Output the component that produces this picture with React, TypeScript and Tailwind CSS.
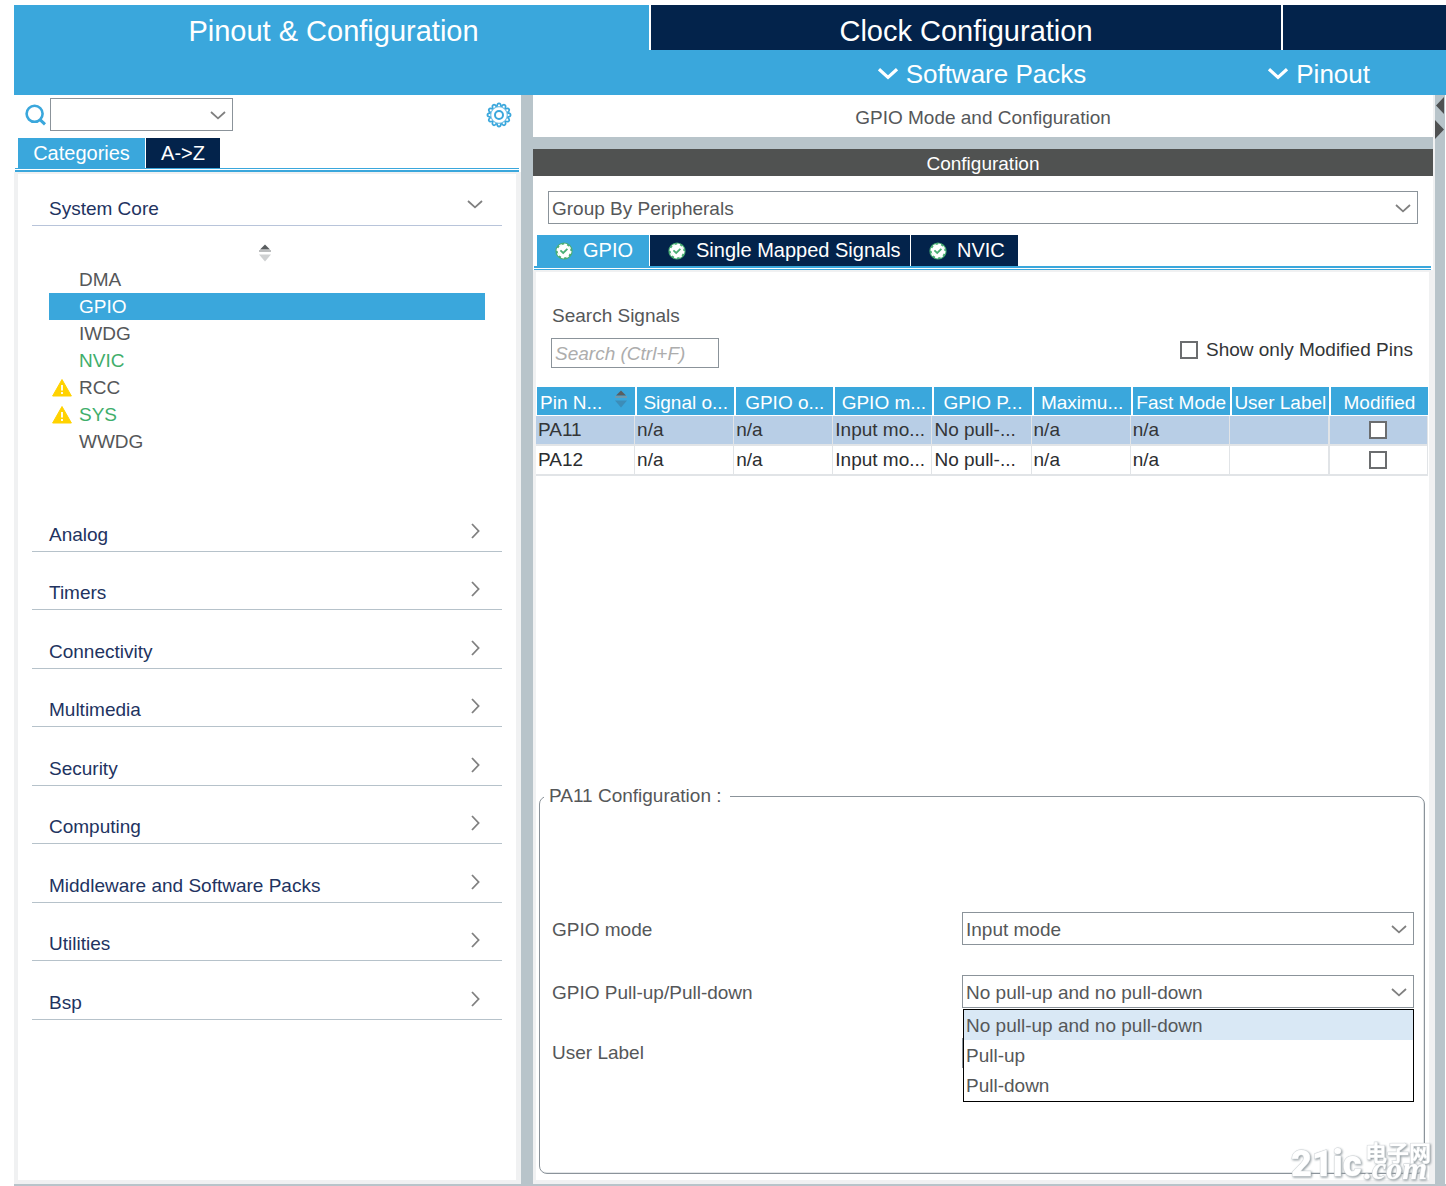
import React, { useState } from "react";

type IconProps = { className?: string };

function Chevron({ className = "" }: IconProps) {
  return (
    <svg viewBox="0 0 16 9" className={`h-[9px] w-4 ${className}`} fill="none" stroke="currentColor" strokeWidth="1.8" aria-hidden="true">
      <path d="M1 1 L8 7.4 L15 1" />
    </svg>
  );
}

function ChevronRight({ className = "" }: IconProps) {
  return (
    <svg viewBox="0 0 9 16" className={`h-4 w-[9px] ${className}`} fill="none" stroke="currentColor" strokeWidth="1.8" aria-hidden="true">
      <path d="M1 1 L7.6 8 L1 15" />
    </svg>
  );
}

function MenuChevron() {
  return (
    <svg viewBox="0 0 20 12" className="h-3 w-5" fill="none" stroke="white" strokeWidth="3.2" aria-hidden="true">
      <path d="M1 1.2 L10 9.4 L19 1.2" />
    </svg>
  );
}

function SearchIcon() {
  return (
    <svg viewBox="0 0 22 22" className="size-[22px]" fill="none" stroke="#3aa7dc" strokeWidth="2.6" aria-hidden="true">
      <circle cx="9.6" cy="9.8" r="8" />
      <path d="M15 15.6 L20 20.4" strokeWidth="3" />
    </svg>
  );
}

function GearIcon() {
  const teeth = Array.from({ length: 12 }, (_, i) => i * 30);
  return (
    <svg viewBox="0 0 26 26" className="size-[26px]" fill="none" stroke="#3aa7dc" aria-hidden="true">
      {teeth.map((a) => (
        <path key={a} d="M10.9 4.6 Q11.2 1.4 13 1.4 Q14.8 1.4 15.1 4.6" strokeWidth="1.7" transform={`rotate(${a} 13 13)`} />
      ))}
      <circle cx="13" cy="13" r="8.3" strokeWidth="1.2" opacity="0.7" />
      <circle cx="13" cy="13" r="4" strokeWidth="2" />
    </svg>
  );
}

function WarningIcon() {
  return (
    <svg viewBox="0 0 20 18" className="h-[18px] w-5" aria-hidden="true">
      <path d="M10 0.5 L19.4 17 H0.6 Z" fill="#ffd200" stroke="#ffd200" strokeLinejoin="round" />
      <path d="M10 6 V11.5 M10 13 V15" stroke="white" strokeWidth="1.8" />
    </svg>
  );
}

function CheckBadge() {
  return (
    <svg viewBox="0 0 18 18" className="size-[18px]" fill="none" aria-hidden="true">
      <circle cx="9" cy="9" r="8.6" fill="#4aae74" />
      <circle cx="9" cy="9" r="6.4" fill="white" />
      <circle cx="9" cy="9" r="6.8" stroke="white" strokeWidth="1.4" strokeDasharray="2.86 2.48" />
      <path d="M5.4 8.4 L8.2 11 L12.4 6.8" stroke="#4aae74" strokeWidth="1.8" />
    </svg>
  );
}

function SortIcon({ lower, className = "" }: { lower: string; className?: string }) {
  return (
    <svg viewBox="0 0 14 18" className={`h-[18px] w-3.5 ${className}`} aria-hidden="true">
      <path d="M7 0.5 L12 5.5 H2 Z" fill="#5a5e60" />
      <path d="M1 6 H13 V8 H1 Z" fill="#8d9193" opacity="0.6" />
      <path d="M1 10.5 H13 L7 17.5 Z" fill={lower} />
    </svg>
  );
}

function SelectBox({ id, label, options }: { id: string; label: string; options: string[] }) {
  return (
    <div className="relative">
      <select
        id={id}
        aria-label={label}
        className="block h-[33px] w-full appearance-none border border-[#8b939a] bg-white pt-[3px] pr-8 pl-[3px] text-[19px] text-[#555759] outline-none"
      >
        {options.map((o) => (
          <option key={o}>{o}</option>
        ))}
      </select>
      <Chevron className="pointer-events-none absolute top-[13px] right-[7px] text-[#808080]" />
    </div>
  );
}

const box = "size-[18px] appearance-none border-2 border-[#6b6d6f] bg-white checked:bg-[#3aa7dc]";

const coreItems = [
  { name: "DMA" },
  { name: "GPIO", selected: true },
  { name: "IWDG" },
  { name: "NVIC", green: true },
  { name: "RCC", warn: true },
  { name: "SYS", green: true, warn: true },
  { name: "WWDG" },
];

const categories = [
  "Analog",
  "Timers",
  "Connectivity",
  "Multimedia",
  "Security",
  "Computing",
  "Middleware and Software Packs",
  "Utilities",
  "Bsp",
];

const columns = [
  "Pin N...",
  "Signal o...",
  "GPIO o...",
  "GPIO m...",
  "GPIO P...",
  "Maximu...",
  "Fast Mode",
  "User Label",
  "Modified",
];

const pins = [
  ["PA11", "n/a", "n/a", "Input mo...", "No pull-...", "n/a", "n/a", ""],
  ["PA12", "n/a", "n/a", "Input mo...", "No pull-...", "n/a", "n/a", ""],
];

const pulls = ["No pull-up and no pull-down", "Pull-up", "Pull-down"];

const tabs = [
  { name: "GPIO", style: "w-[112px] bg-[#3aa7dc]" },
  { name: "Single Mapped Signals", style: "w-[260px] bg-[#03234b]" },
  { name: "NVIC", style: "w-[107px] bg-[#03234b]" },
];

function Sidebar() {
  return (
    <aside className="flex w-[507px] shrink-0 flex-col bg-white">
      <div className="flex items-center pt-[3px] pr-[9px] pl-[11px]">
        <label htmlFor="find" aria-label="Find">
          <SearchIcon />
        </label>
        <div className="ml-[3px] w-[183px]">
          <SelectBox id="find" label="Find" options={[""]} />
        </div>
        <button type="button" aria-label="Settings" className="ml-auto">
          <GearIcon />
        </button>
      </div>
      <div className="mt-[7px] flex gap-px pl-1 text-[20px] leading-[30px] text-white">
        <button type="button" className="w-[127px] bg-[#3aa7dc]">Categories</button>
        <button type="button" className="w-[74px] bg-[#03234b]">A-&gt;Z</button>
      </div>
      <div className="mr-0.5 ml-px h-1 border-t border-b-2 border-[#3aa7dc]" />
      <div className="flex-1 border-t-2 border-r-[5px] border-b-4 border-l-4 border-[#f0f1f2] px-3.5">
        <button type="button" className="flex h-[52px] w-full items-end justify-between border-b border-[#b8c4da] pr-[19px] pb-1 pl-[17px] text-[19px] leading-6 text-[#22335f]">
          System Core
          <Chevron className="mb-3 text-[#808080]" />
        </button>
        <div className="flex h-10 items-center justify-center pt-3.5 pr-1">
          <SortIcon lower="#cfd1d2" />
        </div>
        <ul className="mx-[17px] text-[19px] leading-[27px] text-[#555759]">
          {coreItems.map((it) => (
            <li key={it.name}>
              <button
                type="button"
                className={`flex w-full items-center ${it.selected ? "bg-[#3aa7dc] text-white" : it.green ? "text-[#3fae6b]" : ""}`}
              >
                <span className="flex w-[30px] justify-center pr-1">{it.warn && <WarningIcon />}</span>
                {it.name}
              </button>
            </li>
          ))}
        </ul>
        <div className="mt-[38px] grid h-[527px] auto-rows-fr">
          {categories.map((c) => (
            <button
              key={c}
              type="button"
              className="flex items-end justify-between border-b border-[#b6c2ca] pr-[22px] pb-1 pl-[17px] text-[19px] leading-6 text-[#22335f]"
            >
              {c}
              <ChevronRight className="mb-2 text-[#808080]" />
            </button>
          ))}
        </div>
      </div>
    </aside>
  );
}

function PinTable() {
  return (
    <div className="mt-[19px] mr-px">
      <table className="w-full table-fixed border-separate border-spacing-0 text-[19px]">
        <thead>
          <tr>
            {columns.map((c, i) => (
              <th
                key={c}
                scope="col"
                className="h-[29px] overflow-hidden border-b border-l-2 border-white bg-[#3aa7dc] p-0 pt-[3px] text-center leading-[25px] font-normal whitespace-nowrap text-white first:border-l"
              >
                {i === 0 ? (
                  <span className="flex items-start justify-between pr-[7px] pl-[3px]">
                    {c}
                    <SortIcon lower="#3c8db8" />
                  </span>
                ) : (
                  c
                )}
              </th>
            ))}
          </tr>
        </thead>
        <tbody>
          {pins.map((row, r) => (
            <tr key={row[0]} className={r === 0 ? "bg-[#b8cee6] text-[#333537]" : "bg-white text-[#2b2d2f]"}>
              {row.map((v, i) => (
                <td key={i} className="h-[30px] overflow-hidden border-r border-b-2 border-[#e1e4e7] p-0 pl-0.5 leading-7 whitespace-nowrap">
                  {v}
                </td>
              ))}
              <td className="border-r border-b-2 border-l border-[#e1e4e7] p-0">
                <input type="checkbox" aria-label={`${row[0]} modified`} className={`mx-auto block ${box}`} />
              </td>
            </tr>
          ))}
        </tbody>
      </table>
    </div>
  );
}

function PinConfig() {
  const [pull, setPull] = useState(pulls[0]);
  return (
    <fieldset className="mr-1 mb-1.5 ml-[3px] flex-1 rounded-lg border border-[#8b939a] text-[19px] text-[#555759] shadow-[inset_-1px_-1px_0_#e3e6e8]">
      <legend className="ml-1 pr-2 pl-[5px] leading-6">PA11 Configuration :</legend>
      <div className="grid grid-cols-[410px_1fr] items-center gap-y-[30px] pt-[104px] pr-[10px] pl-3">
        <label htmlFor="mode" className="pt-1">GPIO mode</label>
        <SelectBox id="mode" label="GPIO mode" options={["Input mode"]} />
        <label htmlFor="pull" className="pt-1">GPIO Pull-up/Pull-down</label>
        <div className="relative">
          <SelectBox id="pull" label="GPIO Pull-up/Pull-down" options={[pull]} />
          <ul role="listbox" aria-label="GPIO Pull-up/Pull-down" className="absolute top-[34px] right-0 left-px z-10 border border-black bg-white pb-px">
            {pulls.map((p) => (
              <li
                key={p}
                role="option"
                aria-selected={p === pull}
                onClick={() => setPull(p)}
                className="pt-0.5 pl-0.5 leading-7 aria-selected:bg-[#d9e8f5]"
              >
                {p}
              </li>
            ))}
          </ul>
        </div>
        <label htmlFor="user">User Label</label>
        <input id="user" type="text" className="h-[30px] w-full border border-[#8b939a]" />
      </div>
    </fieldset>
  );
}

function Watermark() {
  return (
    <svg
      viewBox="0 0 154 48"
      className="pointer-events-none absolute right-px bottom-0 h-12 w-[154px] drop-shadow-[1px_1px_1px_#8f989d]"
      fill="white"
      stroke="#d3d7da"
      strokeWidth="1"
      paintOrder="stroke"
    >
      <text x="0" y="38" fontFamily="Roboto, 'Liberation Sans', sans-serif" fontSize="36" fontWeight="900">21ic</text>
      <text x="74" y="23" fontFamily="'Noto Sans CJK SC', sans-serif" fontSize="22" fontWeight="700">电子网</text>
      <text x="73" y="41" fontFamily="'Liberation Serif', serif" fontSize="32" fontWeight="700" fontStyle="italic">.com</text>
    </svg>
  );
}

export default function App() {
  return (
    <div className="relative flex min-h-screen flex-col bg-white pt-[5px] pl-3.5 font-['Liberation_Sans',Arial,sans-serif]">
      <nav className="flex h-[45px] gap-0.5 text-[29px] leading-9 text-white">
        <button type="button" className="w-[635px] bg-[#3aa7dc] pt-[7px] pl-1">Pinout &amp; Configuration</button>
        <button type="button" className="w-[630px] bg-[#03234b] pt-[7px]">Clock Configuration</button>
        <div className="flex-1 bg-[#03234b]" />
      </nav>
      <div className="flex h-[45px] items-center justify-end gap-[182px] bg-[#3aa7dc] pt-[3px] pr-[76px] text-[26px] text-white">
        <button type="button" className="flex items-center gap-2">
          <MenuChevron />
          Software Packs
        </button>
        <button type="button" className="flex items-center gap-2">
          <MenuChevron />
          Pinout
        </button>
      </div>
      <div className="flex flex-1 border-b-2 border-[#b8c4ca]">
        <Sidebar />
        <div className="w-3 shrink-0 bg-[#b8c4ca]" />
        <main className="flex min-w-0 flex-1 flex-col bg-white">
          <h1 className="h-[42px] pt-0.5 text-center text-[19px] leading-[42px] text-[#555759]">GPIO Mode and Configuration</h1>
          <div className="h-3 bg-[#b8c4ca]" />
          <h2 className="bg-[#505251] pt-0.5 text-center text-[19px] leading-[25px] text-white">Configuration</h2>
          <div className="px-[15px] pt-[15px]">
            <SelectBox id="group" label="Group by" options={["Group By Peripherals"]} />
          </div>
          <div className="mt-[11px] flex gap-px pl-1 text-[20px] leading-[31px] whitespace-nowrap text-white">
            {tabs.map((t) => (
              <button key={t.name} type="button" className={`flex items-center gap-2.5 pl-[18px] ${t.style}`}>
                <CheckBadge />
                {t.name}
              </button>
            ))}
          </div>
          <div className="mr-0.5 ml-px h-1 border-t-2 border-b border-[#3aa7dc]" />
          <div className="flex flex-1 flex-col border-t-2 border-r-4 border-b-4 border-l-[3px] border-[#f0f1f2]">
            <div className="flex items-end justify-between pt-8 pr-2 pl-[15px]">
              <div className="flex flex-col text-[19px]">
                <label htmlFor="signals" className="pl-px leading-6 text-[#555759]">Search Signals</label>
                <input
                  id="signals"
                  type="text"
                  placeholder="Search (Ctrl+F)"
                  className="mt-[10px] h-[30px] w-[168px] border border-[#8b939a] pt-0.5 pl-[3px] outline-none placeholder:text-[#adadad] placeholder:italic"
                />
              </div>
              <label className="mb-1.5 flex w-[241px] items-center gap-2 text-[19px] leading-6 text-[#333537]">
                <input type="checkbox" className={box} />
                Show only Modified Pins
              </label>
            </div>
            <PinTable />
            <div className="h-[308px]" />
            <PinConfig />
          </div>
        </main>
        <div className="mr-px flex w-3 shrink-0 flex-col border-l-2 border-[#f0f1f2] bg-[#b8c4ca]">
          <svg viewBox="0 0 10 46" className="h-[46px] w-2.5" fill="#4f5152" aria-hidden="true">
            <path d="M9 2 V19 L1 10.5 Z M0 25 L9 34.5 L0 44 Z" />
          </svg>
        </div>
      </div>
      <Watermark />
    </div>
  );
}
